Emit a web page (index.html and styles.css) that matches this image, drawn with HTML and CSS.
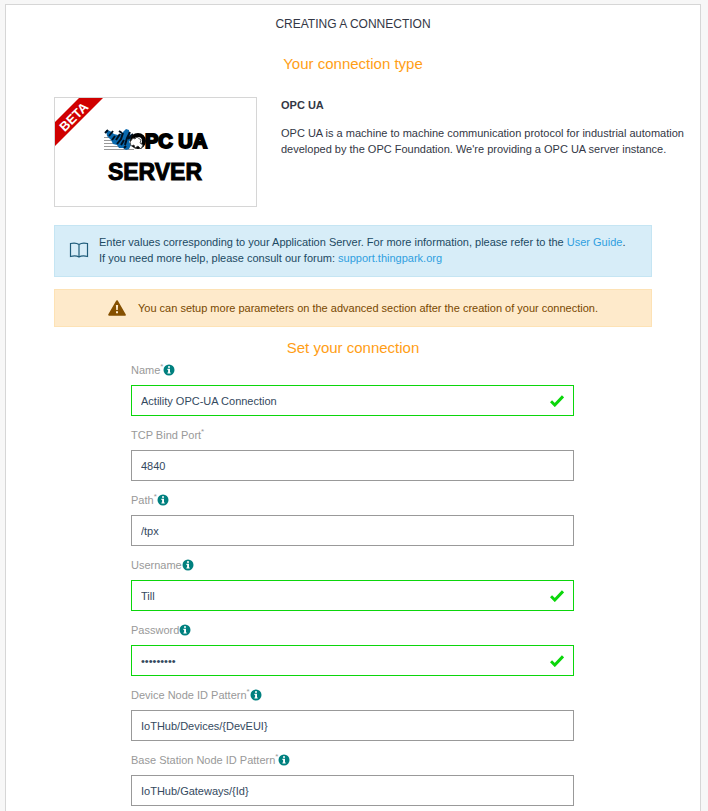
FILE: index.html
```html
<!DOCTYPE html>
<html lang="en">
<head>
<meta charset="utf-8">
<title>Creating a connection</title>
<link rel="stylesheet" href="styles.css">
</head>
<body>
<svg class="sprites" aria-hidden="true">
  <symbol id="info" viewBox="0 0 12 12">
    <circle cx="6" cy="6" r="5.5" fill="#00807f"/>
    <path d="M5 2.200h2v1.600H5zM4.400 4.800H7v3.600h.7v1.100H4.400V8.400h.7V5.900h-.7z" fill="#fff"/>
  </symbol>
  <symbol id="check" viewBox="0 0 14 12">
    <path d="M1 6.200 4.800 10 13 1.400" fill="none" stroke="#0bd60b" stroke-width="3"/>
  </symbol>
</svg>
<main class="card">
  <h1 class="title">CREATING A CONNECTION</h1>
  <h2 class="heading">Your connection type</h2>
  <section class="type">
    <div class="logo">
      <svg viewBox="0 0 201 108" role="img" aria-label="OPC UA Server, beta">
        <path d="M24 0H48L0 48V24z" fill="#d00000"/>
        <text class="beta" x="22" y="22" text-anchor="middle" transform="rotate(-45 22 22)">BETA</text>
        <path d="M49 39.500h14M49 42.500h15M49 45.500h18M49 48.500h24M49 51.500h30" stroke="#999" fill="none"/>
        <path d="M51 32l4 1 4 3 4 1 4-2 4-4 3 1 0 4 3 1-1 4-2 3 2 3-2 4-3 1-3-2-4 0-2-3-4-1-2-4-4-4z" fill="#0a69ad"/>
        <path d="M50 35l3-3M54 38l4-5M57 42l3-4M61 42l4-6M62 46l4-5 2-6M66 47l3-5M70 47l2-7 3-6M69 50l2-2M73 41l5-5M64 33l3 2" fill="none" stroke="#00101f" stroke-width="2"/>
        <ellipse cx="83" cy="43" rx="6" ry="6" fill="#fff" stroke="#000" stroke-width="4"/>
        <path d="M75 44l3-4 2 1 2-2 4 3-1 3 3 2-2 4-3-3-3 2-1-3-3 1z" fill="#fff" stroke="#333" stroke-width=".8"/>
        <text class="brand small" x="90" y="50">PC UA</text>
        <text class="brand" x="100" y="82" text-anchor="middle">SERVER</text>
      </svg>
    </div>
    <div class="about">
      <h3 class="name">OPC UA</h3>
      <p class="text">OPC UA is a machine to machine communication protocol for industrial automation developed by the OPC Foundation. We're providing a OPC UA server instance.</p>
    </div>
  </section>
  <div class="alert info">
    <svg class="book" viewBox="0 0 20 16" aria-hidden="true"><path d="M10 2.500C8 1 4 .9 1.500 1.500v13C4 13.900 8 13.900 10 15c2-1.100 6-1.100 8.500-.5v-13C16 .9 12 1 10 2.500zM10 2.500V15" fill="none" stroke="#1f5c7a" stroke-width="1.200"/></svg>
    <p class="text">Enter values corresponding to your Application Server. For more information, please refer to the <a href="#guide">User Guide</a>.<br>If you need more help, please consult our forum: <a href="#forum">support.thingpark.org</a></p>
  </div>
  <div class="alert warning">
    <svg class="triangle" viewBox="0 0 18 16" aria-hidden="true"><path d="M9 1.200 16.800 14.800H1.200z" fill="#855000" stroke="#855000" stroke-width="2" stroke-linejoin="round"/><path d="M7.900 5h2.200l-.3 5H8.200zM8 11.300h2v2H8z" fill="#feeacb"/></svg>
    <p class="text">You can setup more parameters on the advanced section after the creation of your connection.</p>
  </div>
  <h2 class="heading second">Set your connection</h2>
  <form class="form">
    <div class="field valid">
      <label for="name">Name<sup>*</sup><svg class="hint"><use href="#info"/></svg></label>
      <div class="control"><input id="name" type="text" value="Actility OPC-UA Connection"><svg class="tick"><use href="#check"/></svg></div>
    </div>
    <div class="field">
      <label for="port">TCP Bind Port<sup>*</sup></label>
      <div class="control"><input id="port" type="text" value="4840"></div>
    </div>
    <div class="field">
      <label for="path">Path<sup>*</sup><svg class="hint"><use href="#info"/></svg></label>
      <div class="control"><input id="path" type="text" value="/tpx"></div>
    </div>
    <div class="field valid">
      <label for="user">Username<svg class="hint"><use href="#info"/></svg></label>
      <div class="control"><input id="user" type="text" value="Till"><svg class="tick"><use href="#check"/></svg></div>
    </div>
    <div class="field valid">
      <label for="pass">Password<svg class="hint"><use href="#info"/></svg></label>
      <div class="control"><input id="pass" type="password" value="connector"><svg class="tick"><use href="#check"/></svg></div>
    </div>
    <div class="field">
      <label for="device">Device Node ID Pattern<sup>*</sup><svg class="hint"><use href="#info"/></svg></label>
      <div class="control"><input id="device" type="text" value="IoTHub/Devices/{DevEUI}"></div>
    </div>
    <div class="field">
      <label for="station">Base Station Node ID Pattern<sup>*</sup><svg class="hint"><use href="#info"/></svg></label>
      <div class="control"><input id="station" type="text" value="IoTHub/Gateways/{Id}"></div>
    </div>
  </form>
</main>
</body>
</html>
```
FILE: styles.css
```css
* { box-sizing: border-box; }
body {
  display: flex;
  flex-direction: column;
  min-height: 100vh;
  margin: 0;
  padding: 4px 7px 0 5px;
  background: #f7f7f7;
  color: #333745;
  font: 11px/16px "Liberation Sans", Arial, sans-serif;
}
h1, h2, h3, p { margin: 0; }
.sprites { display: none; }
.card {
  flex: 1;
  padding: 11px 48px 4px;
  background: #fff;
  border: 1px solid #d6d6d6;
  border-bottom: 0;
}
.title, .heading { font-weight: 400; text-align: center; }
.title { font-size: 12px; line-height: 16px; }
.heading {
  margin-top: 20px;
  color: #ff9e16;
  font-size: 15px;
  line-height: 24px;
}
.type { display: flex; gap: 24px; margin: 21px -40px 18px 0; }
.logo { flex: none; width: 203px; height: 110px; border: 1px solid #d6d6d6; }
.logo svg { display: block; width: 100%; height: 100%; }
.beta { fill: #fff; font-size: 13px; font-weight: 700; }
.brand { font-size: 23px; font-weight: 700; fill: #000; stroke: #000; stroke-width: 1px; }
.brand.small { font-size: 20px; stroke-width: 2px; }
.name { margin-bottom: 12px; font-size: 11px; line-height: 16px; font-weight: 700; }
.alert { display: flex; align-items: center; border: 1px solid; }
.alert a { color: #2f9fe0; text-decoration: none; }
.info { gap: 10px; padding: 8px 14px 10px; background: #d7edf8; border-color: #c5e5f3; color: #1c4a63; }
.book { width: 20px; height: 16px; }
.warning { justify-content: center; gap: 12px; margin-top: 12px; padding: 10px; background: #feeacb; border-color: #fde2b5; color: #784800; }
.triangle { width: 18px; height: 16px; }
.second { margin-top: 9px; }
.form { display: grid; gap: 11px; margin: 2px 78px 0 77px; }
.field label { display: flex; height: 16px; margin-bottom: 7px; align-items: center; color: #999; }
.field sup { align-self: flex-start; font-size: 8px; line-height: 10px; }
.hint { width: 12px; height: 12px; }
.control { display: grid; align-items: center; }
.control > * { grid-area: 1 / 1; }
.control input {
  width: 100%;
  height: 31px;
  padding: 0 9px;
  background: #fff;
  border: 1px solid #999;
  border-radius: 0;
  color: #34495e;
  font: inherit;
}
.control input:focus-visible { outline: 1px solid #2f9fe0; }
.valid input { border-color: #0bd60b; }
.tick { width: 14px; height: 12px; margin-right: 10px; justify-self: end; pointer-events: none; }
```
